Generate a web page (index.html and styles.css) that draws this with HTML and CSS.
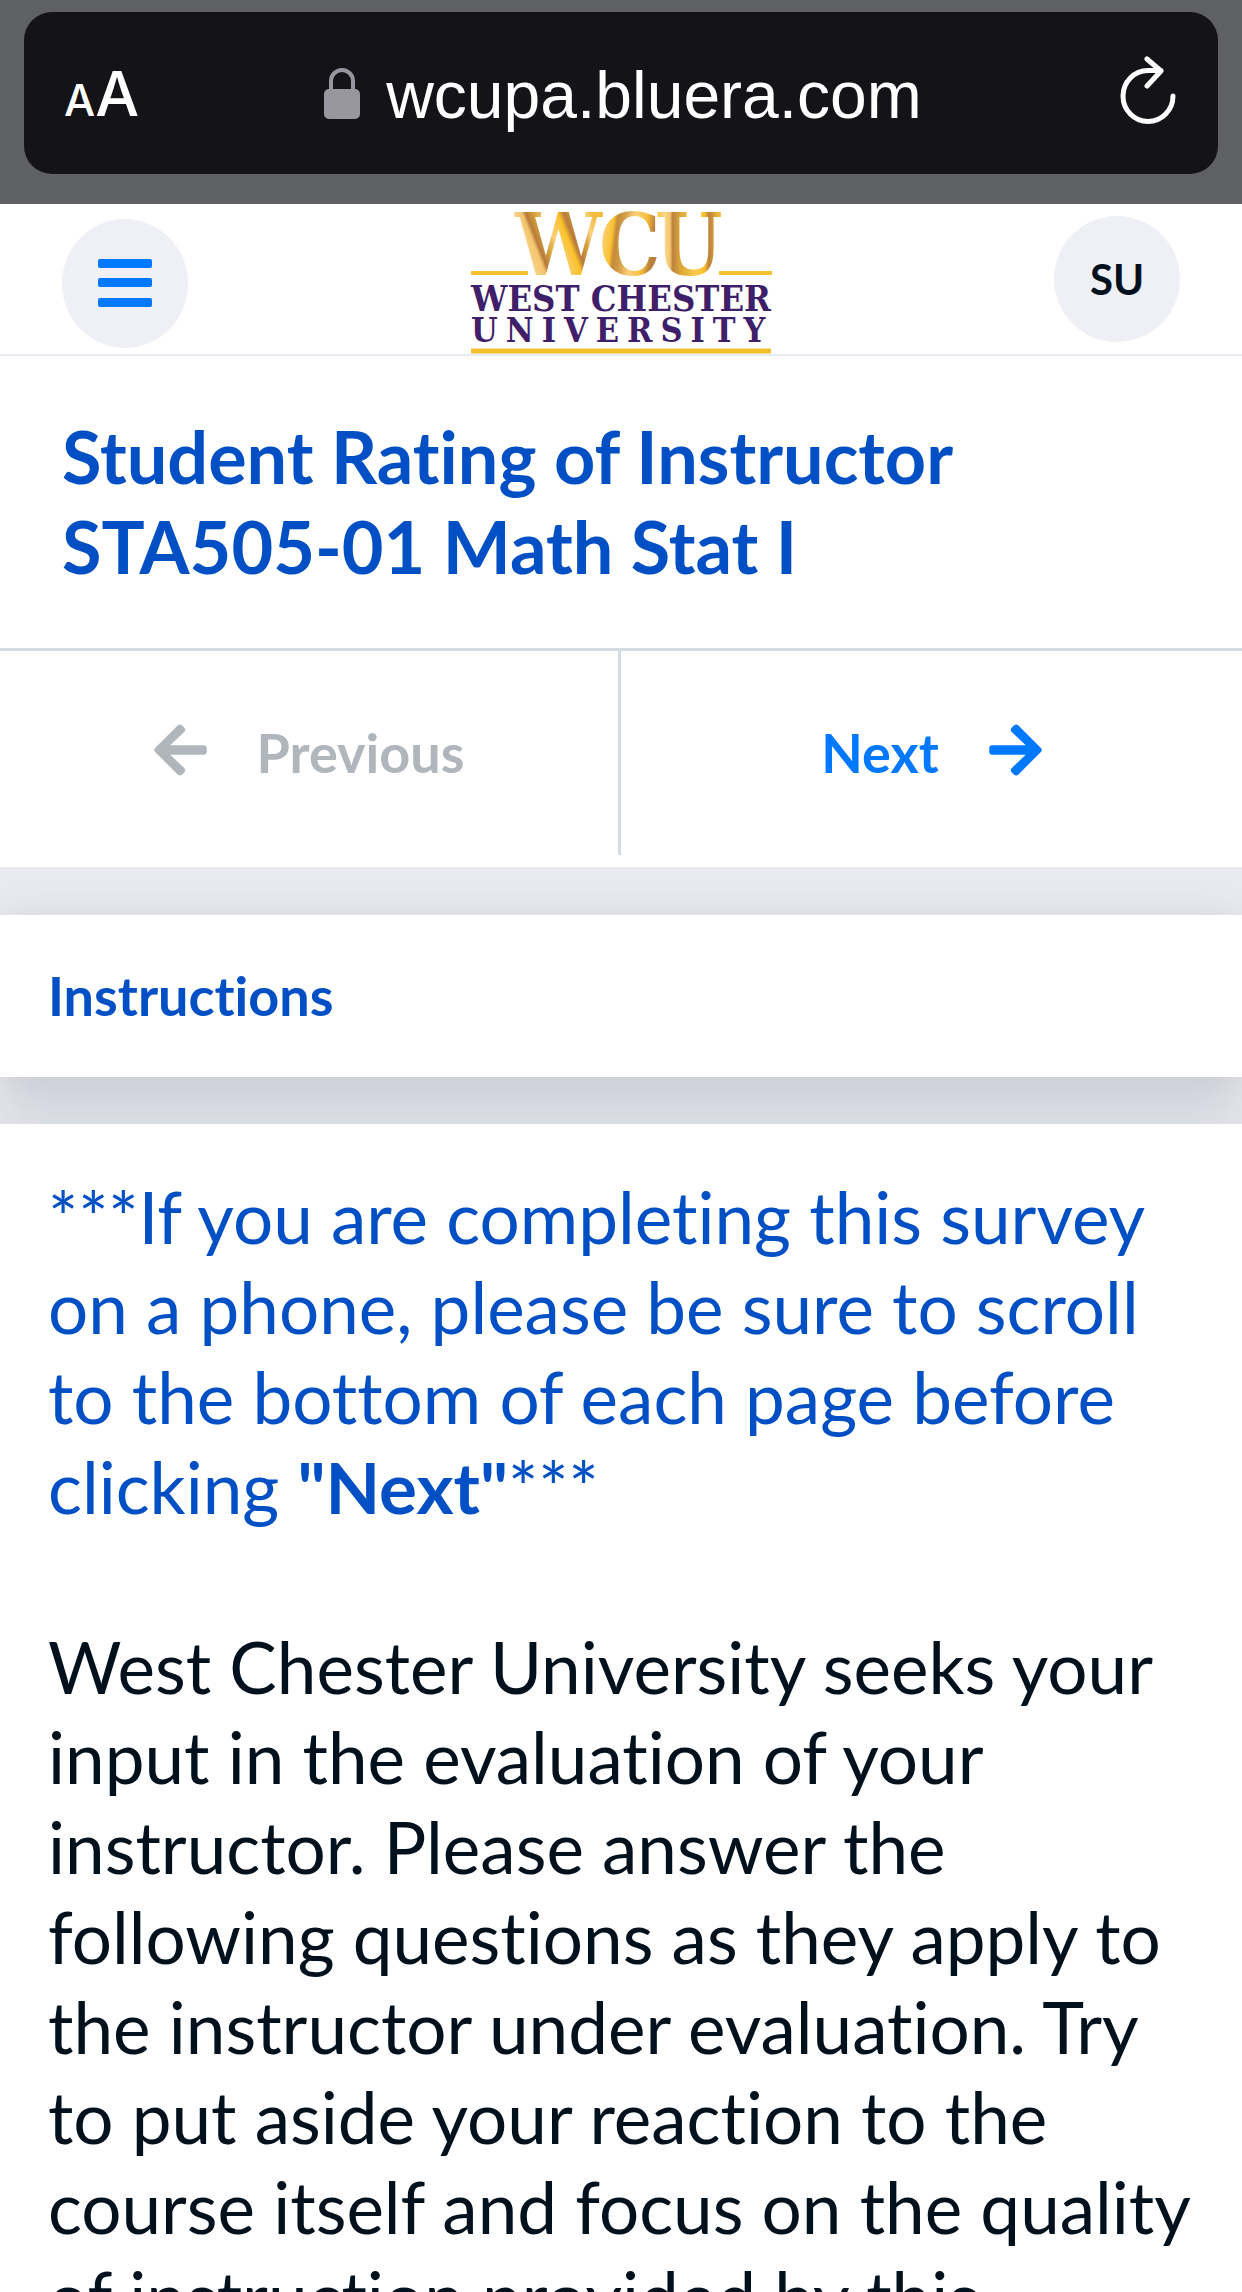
FILE: index.html
```html
<!DOCTYPE html>
<html lang="en">
<head>
<meta charset="utf-8">
<meta name="viewport" content="width=device-width, initial-scale=1">
<title>Student Rating of Instructor</title>
<link rel="stylesheet" href="styles.css">
</head>
<body>
<div class="screen">
  <div class="browser">
    <div class="browser-pill">
      <button class="text-size" type="button" aria-label="Text size"><span class="small-a">A</span><span class="big-a">A</span></button>
      <button class="address" type="button">
        <svg class="lock" viewBox="0 0 36 52" aria-hidden="true">
          <path d="M7 24V14a11 11 0 0 1 22 0v10" fill="none" stroke="#98979f" stroke-width="4"/>
          <rect x="0" y="22" width="36" height="30" rx="5" fill="#98979f"/>
        </svg>
        <span class="host">wcupa.bluera.com</span>
      </button>
      <button class="reload" type="button" aria-label="Reload">
        <svg viewBox="0 0 56 68" aria-hidden="true">
          <path d="M53 40a25 25.500 0 1 1-25-25.500H41M27 3l14 12-14 15" fill="none" stroke="#fff" stroke-width="5" stroke-linecap="round" stroke-linejoin="round"/>
        </svg>
      </button>
    </div>
  </div>

  <header class="site-header">
    <button class="round menu" type="button" aria-label="Menu">
      <svg viewBox="0 0 54 48" aria-hidden="true"><g fill="#0078ff"><rect width="54" height="9" rx="2"/><rect y="19" width="54" height="9" rx="2"/><rect y="39" width="54" height="9" rx="2"/></g></svg>
    </button>
    <a class="logo" href="#" aria-label="West Chester University">
      <svg viewBox="0 0 302 144" role="img" aria-label="WCU West Chester University">
        <defs>
          <linearGradient id="gold-w" gradientUnits="userSpaceOnUse" x1="46" y1="46" x2="128" y2="14">
            <stop offset="0" stop-color="#fdbf2a"/><stop offset=".12" stop-color="#fbd58a"/><stop offset=".24" stop-color="#f3c46e"/><stop offset=".28" stop-color="#b87b3c"/><stop offset=".38" stop-color="#dba63c"/><stop offset=".48" stop-color="#f8cf7c"/><stop offset=".62" stop-color="#fdc22a"/><stop offset=".68" stop-color="#b87b3c"/><stop offset=".8" stop-color="#d8a33f"/><stop offset=".88" stop-color="#f9d27f"/><stop offset="1" stop-color="#f3bb3c"/>
          </linearGradient>
          <linearGradient id="gold-c" gradientUnits="userSpaceOnUse" x1="132" y1="30" x2="182" y2="36">
            <stop offset="0" stop-color="#fbcf74"/><stop offset=".18" stop-color="#fbc333"/><stop offset=".26" stop-color="#c48b3a"/><stop offset=".38" stop-color="#d09a44"/><stop offset=".6" stop-color="#fbd07a"/><stop offset=".85" stop-color="#f5bd38"/><stop offset="1" stop-color="#b9803f"/>
          </linearGradient>
          <linearGradient id="gold-u" gradientUnits="userSpaceOnUse" x1="185" y1="30" x2="248" y2="30">
            <stop offset="0" stop-color="#fdc02b"/><stop offset=".16" stop-color="#fbd68b"/><stop offset=".24" stop-color="#f3c66e"/><stop offset=".28" stop-color="#bd8140"/><stop offset=".4" stop-color="#dba838"/><stop offset=".65" stop-color="#fac94d"/><stop offset=".78" stop-color="#fdc22a"/><stop offset=".86" stop-color="#bb803d"/><stop offset="1" stop-color="#efb637"/>
          </linearGradient>
        </defs>
        <text class="wcu" y="65"><tspan x="45" fill="url(#gold-w)">W</tspan><tspan x="129" fill="url(#gold-c)">C</tspan><tspan x="185" fill="url(#gold-u)">U</tspan></text>
        <path d="M1 63h57M249 63h53" stroke="#f7c232" stroke-width="4"/>
        <text class="wordmark" x="1" y="101">WEST CHESTER</text>
        <text class="wordmark university" x="1" y="132">UNIVERSITY</text>
        <path d="M1 141h300" stroke="#f2c02f" stroke-width="5"/>
      </svg>
    </a>
    <button class="round user" type="button">SU</button>
  </header>

  <div class="title-block">
    <h1>Student Rating of Instructor STA505-01 Math Stat I</h1>
  </div>

  <nav class="pager" aria-label="Survey pages">
    <button class="page-button previous" type="button" disabled>
      <svg viewBox="0 0 448 512" aria-hidden="true"><path fill="currentColor" d="M257.500 445.100l-22.200 22.200c-9.400 9.400-24.600 9.400-33.900 0L7 273c-9.400-9.400-9.400-24.600 0-33.900L201.400 44.700c9.400-9.400 24.600-9.400 33.900 0l22.200 22.200c9.500 9.500 9.300 25-.4 34.300L136.600 216H424c13.300 0 24 10.700 24 24v32c0 13.300-10.700 24-24 24H136.600l120.500 114.800c9.800 9.300 10 24.800.4 34.300z"/></svg>
      <span>Previous</span>
    </button>
    <button class="page-button next" type="button">
      <span>Next</span>
      <svg viewBox="0 0 448 512" aria-hidden="true"><path fill="currentColor" d="M190.500 66.900l22.200-22.200c9.400-9.400 24.600-9.400 33.900 0L441 239c9.400 9.400 9.400 24.600 0 33.900L246.600 467.300c-9.400 9.400-24.600 9.400-33.900 0l-22.200-22.200c-9.500-9.500-9.300-25 .4-34.300L311.400 296H24c-13.300 0-24-10.700-24-24v-32c0-13.300 10.700-24 24-24h287.400L190.900 101.200c-9.800-9.300-10-24.800-.4-34.300z"/></svg>
    </button>
  </nav>

  <section class="card-heading"><h2>Instructions</h2></section>

  <main class="content">
    <p class="notice">***If you are completing this survey on a phone, please be sure to scroll to the bottom of each page before clicking <strong>"Next"</strong>***</p>
    <p>West Chester University seeks your input in the evaluation of your instructor. Please answer the following questions as they apply to the instructor under evaluation. Try to put aside your reaction to the course itself and focus on the quality of instruction provided by this</p>
  </main>
</div>
</body>
</html>
```
FILE: styles.css
```css
* {
  box-sizing: border-box;
}

body {
  margin: 0;
  font-family: Lato, "Liberation Sans", sans-serif;
  font-variant-ligatures: none;
  color: #00111d;
}

h1, h2, p {
  margin: 0;
}

button {
  padding: 0;
  border: 0;
  background: none;
  color: inherit;
  font: inherit;
  font-variant-ligatures: none;
}

svg {
  display: block;
}

.screen {
  display: flex;
  flex-direction: column;
  height: 100vh;
  overflow: hidden;
  background: #e9eaef;
}

.screen > * {
  flex-shrink: 0;
}

/* Browser address bar */
.browser {
  padding: 12px 24px 30px;
  background: #5f6063;
}

.browser-pill {
  display: grid;
  grid-template-columns: 1fr auto 1fr;
  align-items: center;
  height: 162px;
  padding: 0 40px;
  border-radius: 28px;
  background: #141318;
  color: #fff;
}

.text-size {
  display: flex;
  align-items: baseline;
  justify-self: start;
  padding-top: 8px;
  font-family: Inter, "Liberation Sans", sans-serif;
  font-weight: 500;
  line-height: 72px;
}

.small-a {
  font-size: 44px;
}

.big-a {
  font-size: 62px;
}

.address {
  display: flex;
  align-items: center;
  gap: 26px;
  padding-left: 4px;
  font-family: "Liberation Sans", sans-serif;
  font-size: 66px;
  line-height: 78px;
}

.host {
  padding-top: 4px;
}

.lock {
  width: 36px;
  height: 52px;
}

.reload {
  justify-self: end;
  padding: 0 2px 6px 0;
}

.reload svg {
  width: 56px;
  height: 68px;
}

/* Site header */
.site-header {
  position: relative;
  z-index: 1;
  display: grid;
  grid-template-columns: 1fr auto 1fr;
  align-items: center;
  height: 152px;
  padding: 0 62px;
  border-bottom: 2px solid #e8ecf3;
  background: #fff;
}

.round {
  display: flex;
  align-items: center;
  justify-content: center;
  width: 126px;
  height: 126px;
  border-radius: 50%;
  background: #eff0f5;
}

.menu {
  align-self: end;
  height: 129px;
  margin-bottom: 6px;
  padding-bottom: 2px;
}

.menu svg {
  width: 54px;
  height: 48px;
}

.user {
  justify-self: end;
  font-size: 42px;
  font-weight: 700;
}

.logo {
  align-self: end;
}

.logo svg {
  width: 302px;
  height: 144px;
}

.wcu {
  font: 700 86px "DejaVu Serif Condensed", "DejaVu Serif", serif;
}

.wordmark {
  fill: #3f1f69;
  font: 700 36px "DejaVu Serif Condensed", "DejaVu Serif", serif;
}

.university {
  font-size: 34px;
  letter-spacing: 8px;
}

/* Title and pager */
.title-block {
  position: relative;
  z-index: 1;
  padding: 55px 62px 57px;
  background: #fff;
}

h1 {
  max-width: 1000px;
  color: #004fc4;
  font-size: 72px;
  font-weight: 700;
  line-height: 90px;
}

.pager {
  position: relative;
  z-index: 1;
  display: grid;
  grid-template-columns: 1fr 1fr;
  padding-bottom: 12px;
  border-top: 3px solid #d3dce5;
  background: #fff;
}

.page-button {
  display: flex;
  align-items: center;
  justify-content: center;
  gap: 50px;
  height: 204px;
  font-size: 54px;
  font-weight: 700;
  line-height: 66px;
}

.page-button svg {
  width: 53px;
  height: 60px;
  margin-bottom: 6px;
}

.previous {
  border-right: 3px solid #d3dce5;
  color: #b0b6bb;
}

.next {
  color: #0078ff;
}

/* Section heading and text */
.card-heading {
  margin: 48px 0 47px;
  padding: 48px;
  background: #fff;
  box-shadow: 0 0 36px rgba(0, 0, 0, 0.08), 0 60px 48px rgba(20, 40, 80, 0.09);
}

h2 {
  color: #004fc4;
  font-size: 54px;
  font-weight: 700;
  line-height: 66px;
}

.content {
  position: relative;
  z-index: 1;
  display: flex;
  flex-direction: column;
  gap: 90px;
  padding: 48px 36px 48px 48px;
  background: #fff;
  font-size: 71px;
  line-height: 90px;
}

.notice {
  color: #004fc4;
}
```
